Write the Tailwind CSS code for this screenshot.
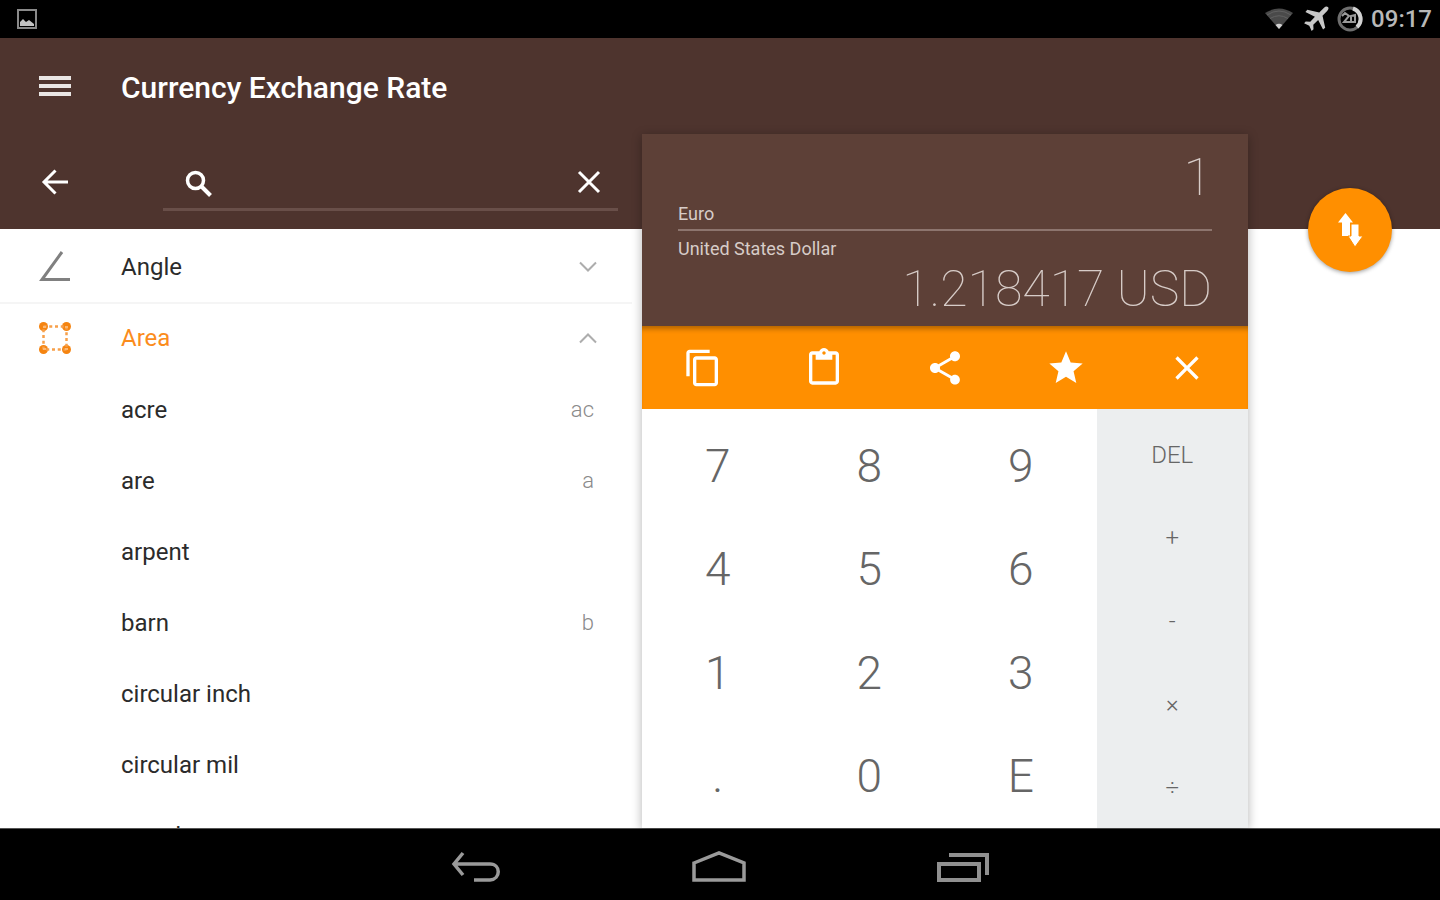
<!DOCTYPE html>
<html lang="en">
<head>
<meta charset="utf-8">
<meta name="viewport" content="width=device-width, initial-scale=1">
<title>Currency Exchange Rate</title>
<script src="https://cdn.jsdelivr.net/npm/@tailwindcss/browser@4"></script>
</head>
<body class="flex h-screen flex-col overflow-hidden bg-white font-[Roboto,'Liberation_Sans',sans-serif] text-[#2b2b2b]">

<!-- Status bar -->
<div class="flex h-[38px] shrink-0 items-center justify-between bg-black pr-2 pl-[17px] text-[#b8b8b8]">
  <svg class="size-5" viewBox="0 0 20 20" fill="none" aria-hidden="true"><rect x="1" y="1" width="18" height="18" stroke="#8a8a8a" stroke-width="2"/><path d="M3 17v-4l3-3 3 3 3-2 5 4v2z" fill="#c4c4c4"/></svg>
  <div class="flex items-center">
    <svg class="mr-2.5 h-6 w-7" viewBox="0 0 28 24" aria-hidden="true"><path d="M0 6Q14-3 28 6L14 22z" fill="#4a4a4a"/><path d="M2 8Q14 0 26 8M5 11.500Q14 6 23 11.500" fill="none" stroke="#626262"/><path d="M10.500 18Q14 15.500 17.500 18L14 22z" fill="#d0d0d0"/></svg>
    <svg class="mr-2 size-[26px]" viewBox="0 0 24 24" fill="#c8c8c8" aria-hidden="true"><path d="M23 1c1 1 .6 2.300-.7 3.600L18 9l2.500 11-2 1.800L14 13l-4.500 4.300.2 4.200L8 23l-2.200-4.800L1 16l1.500-1.700 4.200.2L11 10 2.200 5.500 4 3.500 15 6l4.400-4.300C20.700.4 22 0 23 1z"/></svg>
    <svg class="mr-2 size-[26px]" viewBox="0 0 26 26" fill="none" aria-hidden="true"><circle cx="13" cy="13" r="11" stroke="#6e6e6e" stroke-width="3"/><path d="M16 2.500a11 11 0 0 1 4 18.500" stroke="#d2d2d2" stroke-width="4"/><path d="M5 10l3-3 4 3-5 6h6M14 10l4-1v7h-4z" stroke="#9a9a9a" stroke-width="2"/></svg>
    <time class="text-2xl leading-6 font-medium">09:17</time>
  </div>
</div>

<main class="grid min-h-0 flex-1 grid-cols-[642fr_606fr_192fr] grid-rows-[96px_95px_minmax(0,1fr)]">
  <div class="col-span-3 col-start-1 row-span-2 row-start-1 bg-[#4e342e]"></div>

  <!-- App bar -->
  <header class="col-span-3 col-start-1 row-start-1 flex items-center pl-[39px] text-white">
    <button type="button" aria-label="Open menu" class="mr-[50px]">
      <svg class="h-6 w-8" viewBox="0 0 32 24" fill="#e9e5e4"><path d="M0 2h32v4H0zM0 10h32v4H0zM0 18h32v4H0z"/></svg>
    </button>
    <h1 class="pt-1 text-[30px] leading-9 font-medium">Currency Exchange Rate</h1>
  </header>

  <!-- Unit search -->
  <form class="col-start-1 row-start-2 flex items-center pr-6 pl-[41px]">
    <button type="button" aria-label="Back" class="mr-[94px]">
      <svg class="size-7" viewBox="0 0 28 28" fill="none" stroke="#fff" stroke-width="3"><path d="M27 14H3M14.500 2.500L3 14l11.500 11.500"/></svg>
    </button>
    <div class="mt-1 flex h-[54px] min-w-0 flex-1 items-center border-b-3 border-[#694f49] pt-1 pr-[17px] pl-[22px]">
      <label for="search" class="shrink-0"><svg class="size-7" viewBox="0 0 28 28" fill="none" stroke="#fff" role="img" aria-label="Search"><circle cx="10.500" cy="10.500" r="8" stroke-width="3.500"/><path d="M16 16l9.500 9.500" stroke-width="4"/></svg></label>
      <input id="search" type="text" class="mx-3 min-w-0 flex-1 bg-transparent text-2xl text-white outline-none">
      <button type="button" aria-label="Clear search" class="mb-1">
        <svg class="size-6" viewBox="0 0 24 24" fill="none" stroke="#fff" stroke-width="3"><path d="M2 2l20 20M22 2L2 22"/></svg>
      </button>
    </div>
  </form>

  <!-- Unit list -->
  <ul class="col-start-1 row-start-3 overflow-hidden pt-0.5 pr-2.5 text-2xl">
    <li class="border-b-2 border-[#f5f5f5]">
      <button type="button" aria-expanded="false" class="flex h-[71px] w-full items-center pr-[35px] pl-[39px] text-left">
        <svg class="mr-[50px] size-8" viewBox="0 0 32 32" fill="none" stroke="#808080" stroke-width="3"><path d="M23 1L3 28.500h28"/></svg>
        <span class="flex-1">Angle</span>
        <svg class="h-3 w-[18px]" viewBox="0 0 18 12" fill="none" stroke="#adadad" stroke-width="2"><path d="M1 1.500l8 8 8-8"/></svg>
      </button>
    </li>
    <li>
      <button type="button" aria-expanded="true" class="flex h-[68px] w-full items-center pr-[35px] pl-[39px] text-left text-[#fb8c1c]">
        <svg class="mr-[50px] size-8" viewBox="0 0 32 32" fill="#f58410"><circle cx="4.500" cy="4.500" r="4.500"/><circle cx="27.500" cy="4.500" r="4.500"/><circle cx="4.500" cy="27.500" r="4.500"/><circle cx="27.500" cy="27.500" r="4.500"/><path d="M4.500 4.500h23v23h-23z" fill="none" stroke="#f7a04a" stroke-width="2.500" stroke-dasharray="3 2.750"/><path d="M4 4h3v2H4zM26 4h3v2h-3zM4 26h3v2H4zM26 26h3v2h-3z" fill="#fbb873"/></svg>
        <span class="flex-1">Area</span>
        <svg class="h-3 w-[18px]" viewBox="0 0 18 12" fill="none" stroke="#adadad" stroke-width="2"><path d="M1 10.500l8-8 8 8"/></svg>
      </button>
      <ul class="pt-0.5">
        <li><button type="button" class="flex h-[71px] w-full items-center justify-between pr-[38px] pl-[121px]">acre <span class="text-[22px] font-light text-[#8a8a8a]">ac</span></button></li>
        <li><button type="button" class="flex h-[71px] w-full items-center justify-between pr-[38px] pl-[121px]">are <span class="text-[22px] font-light text-[#8a8a8a]">a</span></button></li>
        <li><button type="button" class="flex h-[71px] w-full items-center justify-between pr-[38px] pl-[121px]">arpent</button></li>
        <li><button type="button" class="flex h-[71px] w-full items-center justify-between pr-[38px] pl-[121px]">barn <span class="text-[22px] font-light text-[#8a8a8a]">b</span></button></li>
        <li><button type="button" class="flex h-[71px] w-full items-center justify-between pr-[38px] pl-[121px]">circular inch</button></li>
        <li><button type="button" class="flex h-[71px] w-full items-center justify-between pr-[38px] pl-[121px]">circular mil</button></li>
        <li><button type="button" class="flex h-[72px] w-full items-center justify-between pr-[38px] pl-[121px]">cuerda</button></li>
      </ul>
    </li>
  </ul>

  <!-- Converter -->
  <section class="z-10 col-start-2 row-span-2 row-start-2 flex flex-col bg-white shadow-[0_2px_10px_rgba(0,0,0,0.3)]" aria-label="Converter">
    <div class="flex h-48 shrink-0 flex-col bg-[#5d4037] px-9 text-[#d7ccc8]">
      <div class="flex h-[97px] flex-col border-b-2 border-[#8d756e] pt-4">
        <output class="text-right text-[52px] leading-14 font-thin">1</output>
        <span class="-mt-1 text-lg leading-6">Euro</span>
      </div>
      <span class="pt-1.5 text-lg leading-6">United States Dollar</span>
      <output class="text-right text-[50px] leading-14 font-thin">1.218417 USD</output>
    </div>
    <div class="grid h-[83px] shrink-0 grid-cols-5 place-items-center bg-[#ff8f00] shadow-[inset_0_6px_5px_-3px_rgba(0,0,0,0.3)]">
      <button type="button" aria-label="Copy"><svg class="size-10" viewBox="0 0 24 24" fill="#fff"><path d="M16 1H4c-1.100 0-2 .9-2 2v14h2V3h12V1zm3 4H8c-1.100 0-2 .9-2 2v14c0 1.100.9 2 2 2h11c1.100 0 2-.9 2-2V7c0-1.100-.9-2-2-2zm0 16H8V7h11v14z"/></svg></button>
      <button type="button" aria-label="Paste"><svg class="size-10" viewBox="0 0 24 24" fill="#fff"><path d="M19 2h-4.180C14.400.84 13.300 0 12 0S9.600.84 9.180 2H5c-1.100 0-2 .9-2 2v16c0 1.100.9 2 2 2h14c1.100 0 2-.9 2-2V4c0-1.100-.9-2-2-2zm-7 0c.55 0 1 .45 1 1s-.45 1-1 1-1-.45-1-1 .45-1 1-1zm7 18H5V4h2v3h10V4h2v16z"/></svg></button>
      <button type="button" aria-label="Share"><svg class="size-10" viewBox="0 0 24 24" fill="#fff"><path d="M18 16.080c-.76 0-1.440.3-1.960.77L8.910 12.700c.05-.23.09-.46.09-.7s-.04-.47-.09-.7l7.050-4.110c.54.5 1.250.81 2.040.81 1.660 0 3-1.340 3-3s-1.340-3-3-3-3 1.340-3 3c0 .24.04.47.09.7L8.040 9.810C7.500 9.310 6.790 9 6 9c-1.660 0-3 1.340-3 3s1.340 3 3 3c.79 0 1.500-.31 2.040-.81l7.120 4.160c-.05.21-.08.43-.08.65 0 1.610 1.310 2.920 2.920 2.920s2.920-1.310 2.920-2.920-1.310-2.920-2.920-2.920z"/></svg></button>
      <button type="button" aria-label="Favorite"><svg class="size-10" viewBox="0 0 24 24" fill="#fff"><path d="M12 17.270L18.180 21l-1.640-7.030L22 9.240l-7.190-.61L12 2 9.190 8.630 2 9.240l5.460 4.730L5.820 21z"/></svg></button>
      <button type="button" aria-label="Clear"><svg class="size-10" viewBox="0 0 24 24" fill="#fff"><path d="M19 6.410L17.590 5 12 10.590 6.410 5 5 6.410 10.590 12 5 17.590 6.410 19 12 13.410 17.590 19 19 17.590 13.410 12z"/></svg></button>
    </div>
    <div class="flex min-h-0 flex-1">
      <div class="grid flex-3 grid-cols-3 grid-rows-4 pt-1.5 text-[46px] font-light text-[#666]">
        <button type="button">7</button><button type="button">8</button><button type="button">9</button>
        <button type="button">4</button><button type="button">5</button><button type="button">6</button>
        <button type="button">1</button><button type="button">2</button><button type="button">3</button>
        <button type="button">.</button><button type="button">0</button><button type="button">E</button>
      </div>
      <div class="grid flex-1 grid-rows-5 bg-[#eceeef] pt-1 text-2xl font-light text-[#666]">
        <button type="button">DEL</button>
        <button type="button">+</button>
        <button type="button">-</button>
        <button type="button">×</button>
        <button type="button">÷</button>
      </div>
    </div>
  </section>

  <button type="button" aria-label="Swap units" class="z-10 col-start-3 row-span-2 row-start-2 mt-[54px] mr-12 grid size-[84px] place-items-center self-start justify-self-end rounded-full bg-[#ff8f00] shadow-[0_1px_4px_rgba(0,0,0,0.4)]">
    <svg class="h-9 w-[26px]" viewBox="0 0 26 36" fill="#fff"><path d="M8.500 1L16 10.500h-3V24H5V10.500H1z"/><path d="M14 12h8v12h4l-8 11-7-11h3z" stroke="#ff8f00" stroke-width="1"/></svg>
  </button>
</main>

<!-- System navigation -->
<nav class="flex h-[72px] shrink-0 justify-center border-t border-[#555] bg-black" aria-label="System">
  <div class="flex w-[538px] items-center justify-between pt-1">
    <button type="button" aria-label="Back"><svg class="h-8 w-[50px]" viewBox="0 0 50 32" fill="none" stroke="#9a9a9a" stroke-width="3.500"><path d="M12 2L3 13l9 11M3 13h36c11 0 11 15 0 16H23"/></svg></button>
    <button type="button" aria-label="Home"><svg class="h-8 w-[56px]" viewBox="0 0 56 32" fill="none" stroke="#9a9a9a" stroke-width="3.500"><path d="M3 12L28 2l25 10v17H3z"/></svg></button>
    <button type="button" aria-label="Recent apps"><svg class="h-8 w-[52px]" viewBox="0 0 52 32" fill="none" stroke="#909090" stroke-width="4"><path d="M2 13h40v16H2zM12 4h38v20"/></svg></button>
  </div>
</nav>
</body>
</html>
